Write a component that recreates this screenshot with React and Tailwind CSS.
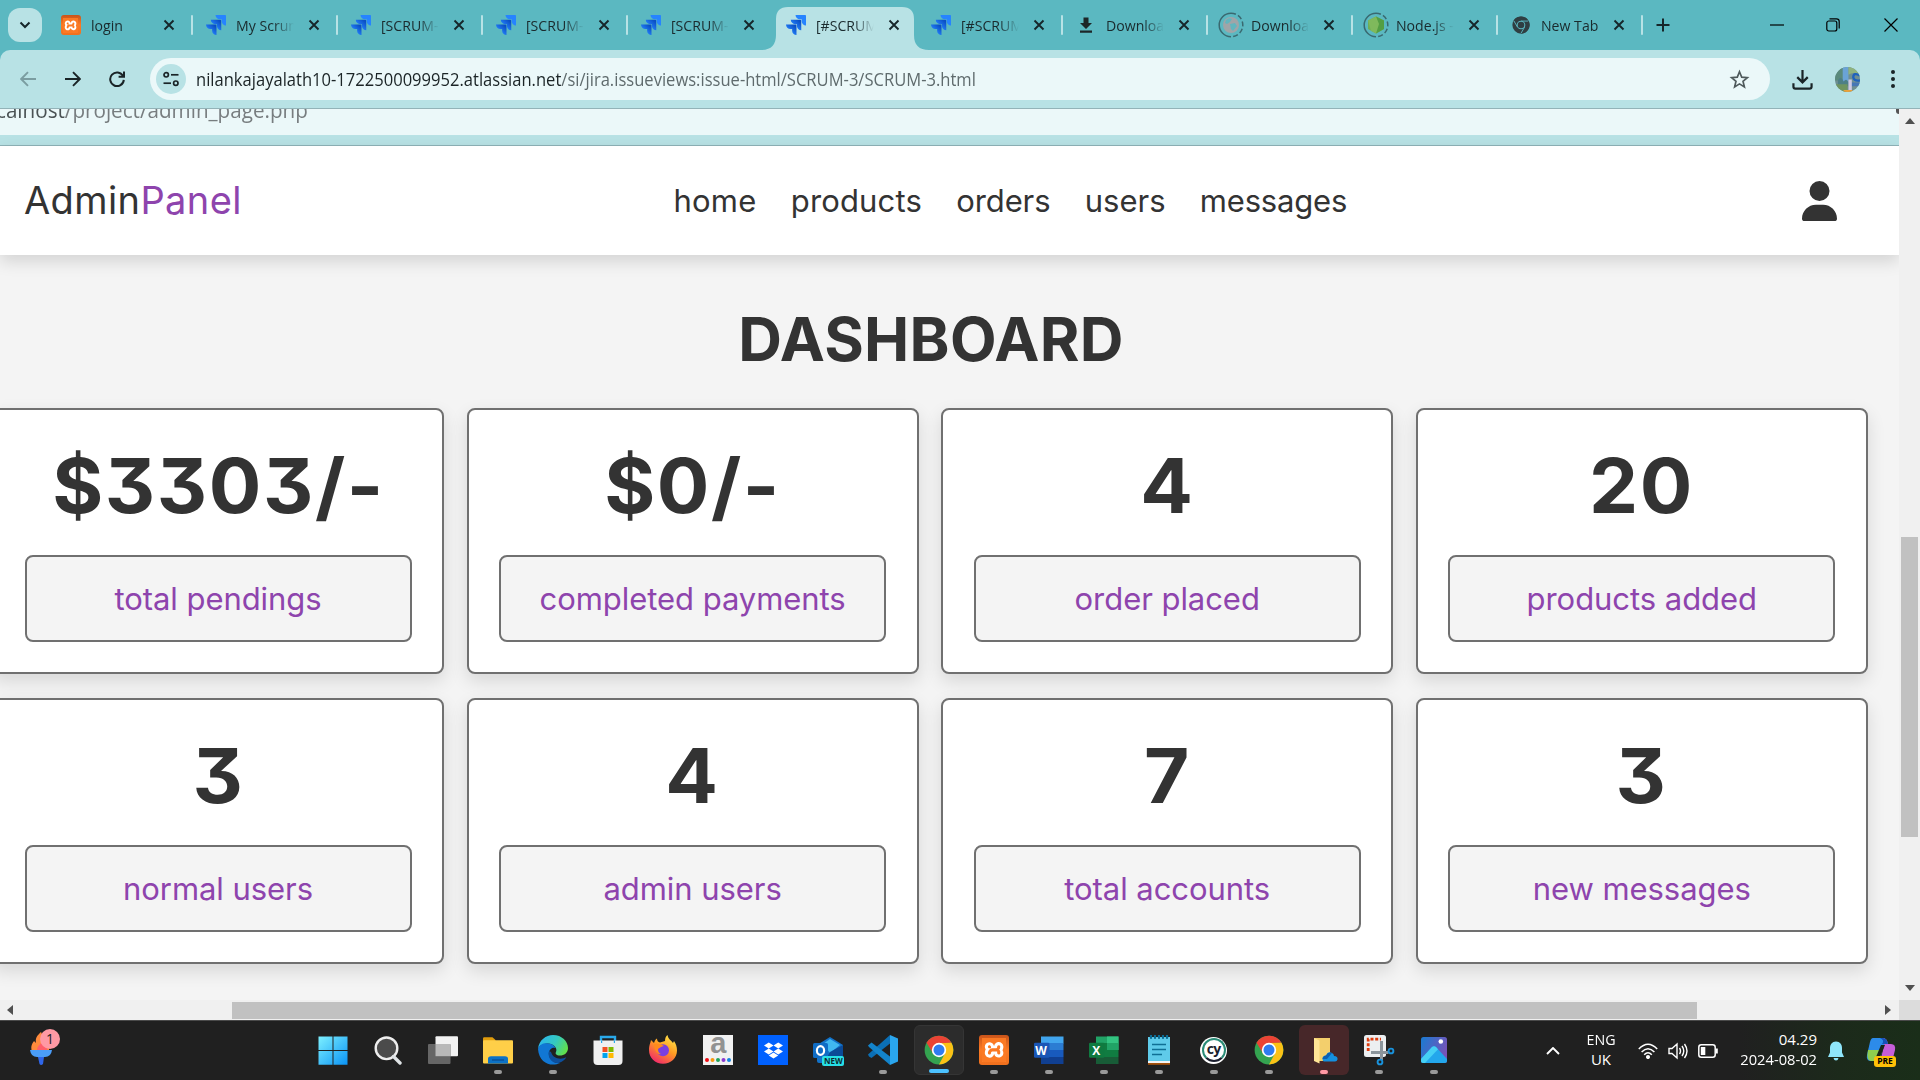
import React from "react";
import { FaUser, FaDropbox } from "react-icons/fa6";
import { SiXampp } from "react-icons/si";

const JIRA = [
  "M11.571 11.513H0a5.218 5.218 0 0 0 5.232 5.215h2.13v2.057A5.215 5.215 0 0 0 12.575 24V12.518a1.005 1.005 0 0 0-1.005-1.005z",
  "M17.294 5.757H5.736a5.215 5.215 0 0 0 5.215 5.214h2.129v2.058a5.218 5.218 0 0 0 5.215 5.214V6.758a1.001 1.001 0 0 0-1.001-1.001z",
  "M23.013 0H11.455a5.215 5.215 0 0 0 5.215 5.215h2.129v2.057A5.215 5.215 0 0 0 24 12.483V1.005A1.001 1.001 0 0 0 23.013 0Z",
];

function JiraIcon() {
  return (
    <svg viewBox="0 0 24 24" className="size-5 shrink-0">
      <defs>
        <linearGradient id="jg" x1="1" y1="0" x2="0.3" y2="0.7">
          <stop offset="0.2" stopColor="#0a4fc4" />
          <stop offset="1" stopColor="#2684ff" />
        </linearGradient>
      </defs>
      <path d={JIRA[0]} fill="url(#jg)" />
      <path d={JIRA[1]} fill="url(#jg)" />
      <path d={JIRA[2]} fill="#2684ff" />
    </svg>
  );
}

function XamppIcon({ className, glyph }) {
  return (
    <span className={`flex shrink-0 items-center justify-center overflow-hidden bg-gradient-to-b from-[#c9541a] via-[#fb7a24] to-[#f0701d] ${className}`}>
      <span className={`overflow-hidden bg-white ${glyph}`}>
        <SiXampp className="size-full scale-[1.06] text-[#fb7a24]" />
      </span>
    </span>
  );
}

function ChromeIcon({ mono, className }) {
  const [r, y, g, b] = mono ? ["#2f3e42", "#2f3e42", "#2f3e42", "#2f3e42"] : ["#ea4335", "#fbc116", "#34a350", "#2f7cf0"];
  const ring = mono ? "#5bb8c1" : "#fff";
  return (
    <svg viewBox="0 0 48 48" className={className}>
      <circle cx="24" cy="24" r="23" fill={g} />
      <path d="M24 24 L4.1 12.5 A23 23 0 0 1 43.9 12.5 L24 13 Z" fill={r} />
      <path d="M4.1 12.5 L14.5 29.5 L24 24 L24 13 Z" fill={r} />
      <path d="M43.9 12.5 A23 23 0 0 1 24 47 L33.5 29.5 L24 24 L24 13 L43.9 12.5 Z" fill={y} />
      {mono && <path d="M24 13.5 H43 M14.5 29.5 L5 13 M33.5 29.5 L24 46" stroke={ring} strokeWidth="2.5" />}
      <circle cx="24" cy="24" r="11.5" fill={ring} />
      <circle cx="24" cy="24" r="8.8" fill={b} />
    </svg>
  );
}

function LoadingIcon({ node }) {
  return (
    <svg viewBox="0 0 26 26" className="-ml-[3px] -mr-[3px] size-[26px] shrink-0">
      <path d="M13 1.2 A11.8 11.8 0 0 0 13 24.8" fill="none" stroke="#3a6970" strokeWidth="1.5" />
      <path d="M13 1.2 A11.8 11.8 0 0 1 13 24.8" fill="none" stroke="#3a6970" strokeWidth="1.5" strokeDasharray="5 2.4" />
      {node ? (
        <>
          <path d="M13 4.5 L21 8.5 V17 L13 21.5 L5 17 V8.5 Z" fill="#6fae55" />
          <path d="M13 4.5 L21 8.5 V17 L13 21.5 Z" fill="#539e43" />
          <path d="M13 4.5 L5 8.5 L8 18.7 L13 21.5 L16 12 Z" fill="#7fb95c" />
        </>
      ) : (
        <>
          <circle cx="13" cy="13" r="8" fill="#9fa5a8" />
          <path d="M8 8 Q11 5 14 7 L12 10 L9 12 L7 11 Z M12 12 L17 11 L19 14 L15 19 L13 17 Z" fill="#62b5be" />
        </>
      )}
    </svg>
  );
}

function DownloadSolid() {
  return (
    <svg viewBox="0 0 20 20" className="size-5 shrink-0" fill="#1d2628">
      <path d="M7.5 2.5h5v5.5h3.5L10 14 4 8h3.5zM4 15.5h12v2.2H4z" />
    </svg>
  );
}

const TABS = [
  { t: "login", i: <XamppIcon className="size-5 rounded-[3px]" glyph="size-[15px]" />, sep: true, full: true },
  { t: "My Scrum", i: <JiraIcon />, sep: true },
  { t: "[SCRUM-", i: <JiraIcon />, sep: true },
  { t: "[SCRUM-", i: <JiraIcon />, sep: true },
  { t: "[SCRUM-", i: <JiraIcon /> },
  { t: "[#SCRUM", i: <JiraIcon />, active: true },
  { t: "[#SCRUM", i: <JiraIcon />, sep: true },
  { t: "Download", i: <DownloadSolid />, sep: true },
  { t: "Download", i: <LoadingIcon />, sep: true },
  { t: "Node.js -", i: <LoadingIcon node />, sep: true },
  { t: "New Tab", i: <ChromeIcon mono className="size-[18px] mx-px shrink-0" />, sep: true, full: true },
];

function Tab({ t, i, sep, active, full }) {
  return (
    <div className="relative flex h-[50px] w-[145px] shrink-0 items-center pl-[13px]">
      {active && (
        <svg viewBox="0 0 168 43" className="absolute -left-[12px] top-[7px] h-[43px] w-[168px]">
          <path d="M0 43 Q15 43 15 28 V12 Q15 0 27 0 H141 Q153 0 153 12 V28 Q153 43 168 43 Z" fill="#b8e2e5" />
        </svg>
      )}
      <div className="relative flex w-full items-center">
        {i}
        <div className={full ? "ml-[10px] w-[58px]" : "ml-[10px] w-[58px] overflow-hidden [mask-image:linear-gradient(to_right,black_65%,transparent_100%)]"}>
          <span className="block origin-left scale-x-[0.94] whitespace-nowrap text-[15px] leading-6 text-[#1a2a2d]">{t}</span>
        </div>
        <svg viewBox="0 0 12 12" className="ml-[14px] size-3 shrink-0" stroke="#16262a" strokeWidth="1.9">
          <path d="M1.5 1.5 L10.5 10.5 M10.5 1.5 L1.5 10.5" />
        </svg>
      </div>
      {sep && <div className="h-5 w-[2px] shrink-0 rounded bg-[#b8e2e5]" />}
    </div>
  );
}

function TabStrip() {
  return (
    <div className="flex h-[50px] items-center bg-[#5bb8c1]">
      <div className="ml-2 mr-[5.5px] flex h-[34px] w-[34px] shrink-0 items-center justify-center rounded-xl bg-[#b8e2e5]">
        <svg viewBox="0 0 12 8" className="h-2 w-3" fill="none" stroke="#16262a" strokeWidth="2">
          <path d="M1.5 1.5 L6 6 L10.5 1.5" />
        </svg>
      </div>
      {TABS.map((tab, n) => <Tab key={n} {...tab} />)}
      <svg viewBox="0 0 14 14" className="ml-[13px] size-[14px]" stroke="#16262a" strokeWidth="2">
        <path d="M7 .5 V13.5 M.5 7 H13.5" />
      </svg>
      <div className="ml-auto flex items-center text-black">
        <svg viewBox="0 0 14 14" className="mr-[42px] size-[14px]" stroke="currentColor" strokeWidth="1.2"><path d="M0 7 H14" /></svg>
        <svg viewBox="0 0 14 14" className="mr-[44px] size-[14px]" fill="none" stroke="currentColor" strokeWidth="1.2">
          <rect x=".8" y="3" width="10" height="10" rx="2" />
          <path d="M3.5 .8 H10.5 Q13.2 .8 13.2 3.5 V10.5" />
        </svg>
        <svg viewBox="0 0 14 14" className="mr-[22px] size-[14px]" stroke="currentColor" strokeWidth="1.2"><path d="M.5 .5 L13.5 13.5 M13.5 .5 L.5 13.5" /></svg>
      </div>
    </div>
  );
}

function Arrow({ back }) {
  return (
    <svg viewBox="0 0 16 16" className={back ? "size-4 rotate-180 text-[#7b9da1]" : "size-4 text-[#1a2427]"} fill="none" stroke="currentColor" strokeWidth="1.9">
      <path d="M0 8 H14.5 M8 1.2 L14.8 8 L8 14.8" />
    </svg>
  );
}

function Toolbar() {
  return (
    <div className="bg-[#5bb8c1]">
      <div className="flex h-[59px] items-center rounded-t-[10px] border-b border-[#93b3b8] bg-[#b8e2e5] pl-[20px]">
        <Arrow back />
        <span className="w-[29px]" />
        <Arrow />
        <span className="w-[28px]" />
        <svg viewBox="0 0 16 16" className="size-4" fill="none" stroke="#1a2427" strokeWidth="2">
          <path d="M14 5 A6.8 6.8 0 1 0 14.8 8.8" />
          <path d="M15 0.5 V5.8 H9.6" />
        </svg>
        <div className="ml-[25px] flex h-[42px] w-[1620px] items-center rounded-full bg-[#ebf8f9] pl-[6px] pr-5">
          <span className="flex size-[30px] items-center justify-center rounded-full bg-[#b8e2e5]">
            <svg viewBox="0 0 16 16" className="size-4" fill="none" stroke="#1a2427" strokeWidth="1.7">
              <circle cx="3.2" cy="3.8" r="2.2" /><path d="M8 3.8 H15.5" />
              <circle cx="12.8" cy="12.2" r="2.2" /><path d="M.5 12.2 H8" />
            </svg>
          </span>
          <span className="ml-[10px] origin-left scale-x-[0.92] whitespace-nowrap text-[18px] leading-6 text-[#1b2426]">
            nilankajayalath10-1722500099952.atlassian.net<span className="text-[#5f6b6d]">/si/jira.issueviews:issue-html/SCRUM-3/SCRUM-3.html</span>
          </span>
          <svg viewBox="0 0 24 24" className="ml-auto size-[21px]" fill="none" stroke="#4f5a5c" strokeWidth="1.9">
            <path d="M12 3.2 L14.5 9.3 L21 9.8 L16 14 L17.6 20.5 L12 17 L6.4 20.5 L8 14 L3 9.8 L9.5 9.3 Z" />
          </svg>
        </div>
        <svg viewBox="0 0 22 22" className="ml-[22px] size-[21px]" fill="none" stroke="#1a2427" strokeWidth="2.3">
          <path d="M11 1 V13.5 M5.5 8.5 L11 14 L16.5 8.5" />
          <path d="M1.5 15 V18.5 Q1.5 20.5 3.5 20.5 H18.5 Q20.5 20.5 20.5 18.5 V15" />
        </svg>
        <svg viewBox="0 0 26 26" className="ml-[22px] size-[25px] rounded-full">
          <rect width="26" height="26" fill="#6f8f92" />
          <path d="M0 0 H9 V14 H0 Z" fill="#5a8a7c" />
          <path d="M8 0 H14 V16 H8 Z" fill="#6aa3d6" />
          <path d="M3 14 Q6 8 9 15 Q12 11 14 16 V20 H3 Z" fill="#4d7f86" />
          <path d="M14 0 H26 V9 Q20 4 14 8 Z" fill="#8fb37e" />
          <path d="M26 9 Q19 5 19 11 Q20 15 26 14" fill="none" stroke="#1f62bd" strokeWidth="2.4" />
          <path d="M16 16 H26 V20 H16 Z" fill="#4676b5" />
          <path d="M0 18 H13 V26 H0 Z" fill="#6f9460" />
          <path d="M14 13 H17.5 V24 H14 Z" fill="#cfc9e2" />
          <path d="M9 24 H18 V26 H9 Z" fill="#e9a13b" />
        </svg>
        <svg viewBox="0 0 4 20" className="ml-[30.5px] h-5 w-1" fill="#1a2427">
          <circle cx="2" cy="3" r="2" /><circle cx="2" cy="10" r="2" /><circle cx="2" cy="17" r="2" />
        </svg>
      </div>
    </div>
  );
}

const CARDS = [
  ["$3303/-", "total pendings"],
  ["$0/-", "completed payments"],
  ["4", "order placed"],
  ["20", "products added"],
  ["3", "normal users"],
  ["4", "admin users"],
  ["7", "total accounts"],
  ["3", "new messages"],
];

function Card({ value, label }) {
  return (
    <div className="h-[266px] rounded-lg border-2 border-[#707070] bg-white px-[30.5px] pt-[38px] text-center shadow-[0_7px_18px_rgba(0,0,0,0.12)]">
      <div className="scale-x-[1.04] text-[75px] font-bold leading-none tracking-[1.5px] text-[#333]">{value}</div>
      <div className="mt-8 flex h-[87px] items-center justify-center rounded-lg border-2 border-[#707070] bg-[#f4f4f4] pb-px text-[31px] leading-none tracking-[-0.05px] text-[#8e44ad]">
        {label}
      </div>
    </div>
  );
}

function PageView() {
  return (
    <div className="h-[891px] min-w-0 flex-1 overflow-hidden bg-[#f4f4f4]">
      <div className="h-[26px] overflow-hidden bg-[#ebf8f9]">
        <div className="flex justify-between">
          <div className="-ml-[4px] -mt-[14px] origin-left scale-x-[0.96] whitespace-nowrap text-[21.5px] leading-[29px] text-[#777d7f]">
            <span className="text-[#4a5254]">calhost</span>/project/admin_page.php
          </div>
          <div className="h-[5px] w-[3px] rounded-bl-full bg-[#555]" />
        </div>
      </div>
      <div className="h-[11px] border-b border-[#8fb3b8] bg-[#b8e2e5]" />
      <div className="font-[Inter,sans-serif] [font-feature-settings:'cv09']">
        <header className="relative flex h-[109px] items-center bg-white pl-6 text-[#333] shadow-[0_6px_16px_rgba(0,0,0,0.14)]">
          <div className="w-[649.5px] pb-[2px] text-[38px] leading-none tracking-[0.4px]">
            Admin<span className="text-[#8e44ad]">Panel</span>
          </div>
          <nav className="flex gap-[34.3px] pb-px text-[31px] leading-none">
            <span className="tracking-[0.2px]">home</span>
            <span className="tracking-[0.15px]">products</span>
            <span className="tracking-[-0.1px]">orders</span>
            <span>users</span>
            <span className="tracking-[-0.2px]">messages</span>
          </nav>
          <FaUser className="ml-auto mr-[62px] h-10 w-[35px]" />
        </header>
        <h1 className="ml-[-37px] mt-[54px] text-center text-[60.5px] font-bold leading-none tracking-[0.3px] text-[#333]">DASHBOARD</h1>
        <div className="-ml-[8px] mt-[38.5px] grid grid-cols-[repeat(4,452px)] gap-x-[22.6px] gap-y-6">
          {CARDS.map(([v, l], n) => <Card key={n} value={v} label={l} />)}
        </div>
      </div>
    </div>
  );
}

function Tri({ className }) {
  return <svg viewBox="0 0 10 6" className={`h-[6px] w-[10px] shrink-0 ${className}`} fill="#505050"><path d="M0 6 L5 0 L10 6 Z" /></svg>;
}

const I = "size-[30px]";

function AppIcon({ name }) {
  switch (name) {
    case "start":
      return (
        <svg viewBox="0 0 30 30" className={I}>
          <defs><linearGradient id="win" x1="0" y1="0" x2="1" y2="1"><stop stopColor="#7df0ff" /><stop offset="1" stopColor="#0a93f5" /></linearGradient></defs>
          <path d="M.5 1.5 H14.5 V15 H.5 Z M15.5 1.5 H29.5 V15 H15.5 Z M.5 16 H14.5 V29.8 H.5 Z M15.5 16 H29.5 V29.8 H15.5 Z" fill="url(#win)" />
        </svg>
      );
    case "search":
      return (
        <svg viewBox="0 0 30 30" className={I}>
          <circle cx="13.5" cy="13.3" r="10.8" fill="#4b4b4b" stroke="#eee" strokeWidth="2.4" />
          <path d="M20.5 21.5 L27 28" stroke="#dfe3e6" strokeWidth="3.4" strokeLinecap="round" />
        </svg>
      );
    case "taskview":
      return (
        <svg viewBox="0 0 30 30" className={I}>
          <rect x="7.5" y="1.2" width="22.5" height="20" rx="1" fill="#f2f2f2" />
          <rect x="0" y="9" width="22.5" height="20" rx="1" fill="#666" />
          <path d="M7.5 9 H22.5 V21.2 H7.5 Z" fill="#b9b9b9" />
        </svg>
      );
    case "explorer":
      return (
        <svg viewBox="0 0 30 30" className={I}>
          <path d="M0 3.5 Q0 2.3 1.2 2.3 H9.5 L12.5 5 V9 H0 Z" fill="#e09c0c" />
          <rect y="5.2" width="30" height="23.3" rx="1" fill="#ffcf48" />
          <path d="M5 28.5 V24 Q5 21.3 8 21.3 H22 Q25 21.3 25 24 V28.5 Z" fill="#0c72c6" />
          <path d="M9 25 H21" stroke="#0b4f95" strokeWidth="1.4" />
        </svg>
      );
    case "edge":
      return (
        <svg viewBox="0 0 30 30" className={I}>
          <defs><linearGradient id="eg" x1="0" y1="0.2" x2="1" y2="0.6"><stop stopColor="#2bb5f0" /><stop offset=".55" stopColor="#35c9c0" /><stop offset="1" stopColor="#62e04a" /></linearGradient></defs>
          <path d="M0 14 C1 5 8 0 15 0 C24 0 30 6.5 30 13 C30 18 26 20.5 22 20.5 C18 20.5 17 18.5 18 17 C20 13 15 8 9 8.5 C4.5 9 1 11 0 14 Z" fill="url(#eg)" />
          <path d="M0 14 C1 10 5 8 9 8.3 C14 8.6 17 11 17.5 13 C14 11.5 10 15 11 20 C12 25 17 29 22 28 C14 32 1 29 0 14 Z" fill="#1177d4" />
          <path d="M11 16 C9 23 15 30 22 27.5 C25 26.3 27 24.5 28.3 22.2 C23 25 15 24 13 17 Z" fill="#0d4f9c" />
        </svg>
      );
    case "store":
      return (
        <svg viewBox="0 0 30 30" className={I}>
          <path d="M8 8 V2 H22 V8" fill="none" stroke="#29a9ea" strokeWidth="2.4" />
          <path d="M.5 5.5 H29.5 V26 Q29.5 30 25.5 30 H4.5 Q.5 30 .5 26 Z" fill="#f0f0f0" />
          <path d="M8 5.5 V8 H9.2 V5.5 Z M20.8 5.5 V8 H22 V5.5 Z" fill="#29a9ea" />
          <path d="M9.5 12 H14.5 V17 H9.5 Z" fill="#f25022" /><path d="M15.5 12 H20.5 V17 H15.5 Z" fill="#7fba00" />
          <path d="M9.5 18 H14.5 V23 H9.5 Z" fill="#00a4ef" /><path d="M15.5 18 H20.5 V23 H15.5 Z" fill="#ffb900" />
        </svg>
      );
    case "firefox":
      return (
        <svg viewBox="0 0 30 30" className={I}>
          <defs><linearGradient id="ff" x1="0.8" y1="0" x2="0.2" y2="1"><stop stopColor="#ffe84a" /><stop offset=".45" stopColor="#ff9a22" /><stop offset="1" stopColor="#f02070" /></linearGradient></defs>
          <path d="M1 15 C1 10 2.5 8 3 5 L6 8 C7 5 8 4 9 3.5 C9 6 10 7 12 7.5 L17 6 C17 3 18 1 19.5 0 C20 4 23 5 25 8 L26 6 C28 9 29 12 29 15.5 C29 23 23 28.7 15 28.7 C7 28.7 1 23 1 15 Z" fill="url(#ff)" />
          <circle cx="15" cy="15.3" r="6" fill="#7a3fe0" />
          <path d="M6 9 C9 7.5 13 9 16 11 C13 11.5 12 12.5 10 14 C10 17 11 18 13 19 C9 20 6 15 6 9 Z" fill="#ff8a1c" />
        </svg>
      );
    case "amazon":
      return (
        <span className="relative flex size-[30px] justify-center bg-[#f1f1f1]">
          <span className="-mt-[5px] font-['Liberation_Sans',sans-serif] text-[29px] font-bold leading-[26px] text-[#929292]">a</span>
          <svg viewBox="0 0 30 6" className="absolute bottom-[2px] left-0 h-[6px] w-[30px]">
            <circle cx="4" cy="3" r="2" fill="#f00c14" /><circle cx="9.5" cy="3" r="2" fill="#f79a10" /><circle cx="15" cy="3" r="2" fill="#20a35a" /><circle cx="20.5" cy="3" r="2" fill="#8a3ad0" /><circle cx="26" cy="3" r="2" fill="#1583e0" />
          </svg>
        </span>
      );
    case "dropbox":
      return <span className="flex size-[30px] items-center justify-center bg-[#0061ff]"><FaDropbox className="size-[19px] text-white" /></span>;
    case "outlook":
      return (
        <span className="relative size-[30px]">
          <svg viewBox="0 0 30 30" className={I}>
            <path d="M4 10 L17 2 L30 10 V26 Q30 28 28 28 H6 Q4 28 4 26 Z" fill="#1272c9" />
            <path d="M10 9 L17 4 L27 10 L17 18 Z" fill="#40b8f0" />
            <path d="M17 17 L30 10 V22 H14 Z" fill="#0b4a97" />
            <rect x="0" y="8" width="15" height="15" rx="1.5" fill="#0f6cc4" />
            <ellipse cx="7.5" cy="15.5" rx="3.6" ry="4.3" fill="none" stroke="#fff" strokeWidth="2.2" />
          </svg>
          <span className="absolute -bottom-px left-[9px] flex h-[10px] w-[22px] items-center justify-center rounded-[2px] bg-[#27dfe6] text-[8px] font-bold leading-none text-[#0b2b30]">NEW</span>
        </span>
      );
    case "vscode":
      return (
        <svg viewBox="0 0 30 30" className={I}>
          <path d="M0 19.5 L22 0 V8.5 L3.5 23 L1 21.5 Z" fill="#0b6fb5" />
          <path d="M0 10.5 L3.5 7.5 L22 21.5 V30 L1 12 Z" fill="#1384cb" />
          <path d="M22 0 L30 3.5 V26.5 L22 30 Z" fill="#2aa6ee" />
        </svg>
      );
    case "chrome":
      return <ChromeIcon className={I} />;
    case "xampp":
      return <XamppIcon className="size-[30px] rounded-[3px]" glyph="size-6" />;
    case "word":
    case "excel": {
      const w = name === "word";
      const c = w ? ["#41a5ee", "#2b7cd3", "#185abd", "#103f91", "#1a56b6"] : ["#21a366", "#33c481", "#107c41", "#185c37", "#0f7a40"];
      return (
        <span className="relative size-[30px]">
          <svg viewBox="0 0 30 30" className={I}>
            <rect x="7" y="1.5" width="22.5" height="7" fill={c[0]} /><rect x="7" y="8" width="22.5" height="7" fill={c[1]} />
            <rect x="7" y="15" width="22.5" height="7" fill={c[2]} /><rect x="7" y="22" width="22.5" height="7" fill={c[3]} />
            {!w && <path d="M18 1.5 H29.5 V8 H18 Z" fill="#33c481" />}
            {!w && <path d="M18 8 H29.5 V15 H18 Z" fill="#21a366" />}
            {!w && <path d="M7 8 H18 V22 H7 Z" fill="#107c41" />}
            <rect x="0" y="7.8" width="15.5" height="15" rx="1.3" fill={c[4]} />
          </svg>
          <span className="absolute left-0 top-[8px] w-[15px] text-center text-[12px] font-bold leading-[15px] text-white">{w ? "W" : "X"}</span>
        </span>
      );
    }
    case "notepad":
      return (
        <svg viewBox="0 0 30 30" className={I}>
          <path d="M4 26 H26 V29.8 H4 Z" fill="#a5520c" />
          <path d="M4 25 H26 V28 H4 Z" fill="#f4f4f4" />
          <path d="M4 2 H26 V26 H4 Z" fill="#5fcbea" />
          <path d="M7 0 V3 M11 0 V3 M15 0 V3 M19 0 V3 M23 0 V3" stroke="#0b6b93" strokeWidth="2.2" strokeLinecap="round" />
          <path d="M8 9.5 H22 M8 14.5 H22 M8 19.5 H18" stroke="#0f6f95" strokeWidth="1.7" />
        </svg>
      );
    case "cypress":
      return (
        <span className="flex size-[27px] items-center justify-center rounded-full bg-white">
          <span className="flex size-[24px] items-center justify-center rounded-full border-2 border-[#2a8c77] border-b-[#1b1e2e] pb-[3px] text-[14px] font-bold leading-none tracking-[-0.5px] text-[#1b1e2e]">cy</span>
        </span>
      );
    case "onedrive":
      return (
        <svg viewBox="0 0 30 30" className={I}>
          <path d="M5 3 H21 V26 H8 Z" fill="#f3cf6c" />
          <path d="M5 3 L10.5 5.5 V28.5 L5 26 Z" fill="#ffe596" />
          <path d="M14 26 Q12 21 17 20.5 Q19 15.5 23 18 Q25 19 25 21 Q29 21 28.5 24.5 Q28 26.5 26 26.5 H15 Z" fill="#1490df" />
          <path d="M13.5 24 Q14 20.5 17 20.5 Q19 16 23 18 L18 24 Z" fill="#0a5fb4" />
        </svg>
      );
    case "snip":
      return (
        <svg viewBox="0 0 30 30" className={`${I} overflow-visible`}>
          <rect x="0" y="0" width="22" height="22" rx="2.5" fill="#eceff1" />
          <path d="M4.2 16 V4.2 H17" fill="none" stroke="#dd3a0c" strokeWidth="2.8" strokeDasharray="3 1.7" />
          <path d="M7 17.5 H24.5 M17.5 6 V25" stroke="#8b959c" strokeWidth="3" />
          <circle cx="27" cy="16" r="2.4" fill="none" stroke="#1993dd" strokeWidth="1.9" />
          <circle cx="16" cy="27" r="2.4" fill="none" stroke="#1993dd" strokeWidth="1.9" />
        </svg>
      );
    default:
      return (
        <svg viewBox="0 0 30 30" className={I}>
          <defs><linearGradient id="ph" x1="0" y1="0.2" x2="1" y2="0.6"><stop stopColor="#1f79d0" /><stop offset="1" stopColor="#7a52b8" /></linearGradient></defs>
          <rect x="2" y="2" width="26" height="26" rx="2.5" fill="url(#ph)" />
          <path d="M2 24 L13 12 Q15 10.5 17 12 L28 24 V25.5 Q28 28 25.5 28 H4.5 Q2 28 2 25.5 Z" fill="#23a7ec" />
          <path d="M2 24 L13 12 Q15 10.5 17 12 L19 14.2 L6 28 H4.5 Q2 28 2 25.5 Z" fill="#45d0f5" />
          <circle cx="21.8" cy="6.5" r="2.3" fill="#fff" />
        </svg>
      );
  }
}

const APPS = [
  ["start"], ["search"], ["taskview"], ["explorer", 1], ["edge", 1], ["store"], ["firefox"], ["amazon"], ["dropbox"], ["outlook"],
  ["vscode", 1], ["chrome", 2], ["xampp", 1], ["word", 1], ["excel", 1], ["notepad", 1], ["cypress", 1], ["chrome", 1], ["onedrive", 3], ["snip", 1], ["photos", 1],
];

const TILE = { 2: "border border-[#353535] bg-[#2c2c2c]", 3: "bg-[#472729]" };
const MARK = { 1: "w-2 bg-[#9a9a9a]", 2: "w-5 bg-[#4cc2ff]", 3: "w-2 bg-[#ff99a4]" };

function Taskbar() {
  return (
    <div className="flex h-[60px] border-t border-[#4a4a4a] bg-[linear-gradient(to_right,#202020_0,#202020_1740px,#1c2a1b_1840px,#1a2e19_1920px)] text-white">
      <div className="relative w-[305.5px] shrink-0">
        <svg viewBox="0 0 24 36" className="ml-[29px] mt-[8px] h-9 w-6">
          <path d="M3 23 C1 16 4 14 5 12 L7 14 C6 8 9 6 12 3 C15 10 21 12 20 23 Z" fill="#ff8a3c" />
          <path d="M8 22 C8 16 12 16 13 12 C17 16 19 19 18 23 Z" fill="#ff5f6b" />
          <path d="M1 21 H23 Q22 28 16 28 H8 Q2 28 1 21 Z" fill="#4a9df8" />
          <path d="M9 28 H15 L14 35 Q12 37 10.5 35 Z" fill="#2f66ea" />
        </svg>
        <span className="absolute left-10 top-[8px] flex size-5 items-center justify-center rounded-full bg-[#ff99a4] text-[14px] leading-none text-[#222]">1</span>
      </div>
      <div className="flex">
        {APPS.map(([name, state], n) => (
          <div key={n} className="flex w-[55.06px] shrink-0 justify-center pt-1">
            <div className={`relative flex size-[50px] items-center justify-center rounded-md ${TILE[state] || ""}`}>
              <AppIcon name={name} />
              {state && <span className={`absolute bottom-[1px] h-1 rounded-full ${MARK[state]}`} />}
            </div>
          </div>
        ))}
      </div>
      <div className="ml-auto flex items-center text-[15px] leading-5">
        <svg viewBox="0 0 14 8" className="mr-[26px] h-2 w-[14px]" fill="none" stroke="#fff" strokeWidth="1.9"><path d="M1 7 L7 1 L13 7" /></svg>
        <div className="mr-[22px] w-[30px] pb-[3px] text-center"><div className="-mx-2 scale-x-95">ENG</div><div>UK</div></div>
        <svg viewBox="0 0 20 16" className="mr-[10px] h-4 w-5" fill="none" stroke="#fff" strokeWidth="1.5">
          <path d="M.8 6 Q10 -3.5 19.2 6 M3.6 9 Q10 2.3 16.4 9 M6.2 11.8 Q10 7.8 13.8 11.8" /><circle cx="10" cy="14" r="1.3" fill="#fff" />
        </svg>
        <svg viewBox="0 0 20 18" className="mr-[10px] h-[18px] w-5" fill="none" stroke="#fff" strokeWidth="1.4">
          <path d="M1 6.5 H4 L9 2 V16 L4 11.5 H1 Z M11.5 6 Q13.5 9 11.5 12 M14 4 Q17.5 9 14 14 M16.5 2 Q21.5 9 16.5 16" />
        </svg>
        <svg viewBox="0 0 20 14" className="mr-[19px] h-[14px] w-5" fill="none" stroke="#fff" strokeWidth="1.5">
          <rect x=".8" y=".8" width="16.4" height="12.4" rx="2.5" /><path d="M18.8 4.5 V9.5" strokeWidth="2" /><rect x="2.8" y="3" width="4.5" height="8" fill="#fff" stroke="none" />
        </svg>
        <div className="mr-[10px] w-[80px] pb-[3px] text-right"><div>04.29</div><div className="origin-right scale-x-[0.98] whitespace-nowrap">2024-08-02</div></div>
        <svg viewBox="0 0 18 20" className="mr-[21px] h-5 w-[18px]" fill="#8fe6fb">
          <path d="M9 .5 C13 .5 15 3.5 15 7 V11.5 L17 16 H1 L3 11.5 V7 C3 3.5 5 .5 9 .5 Z M6.5 17 H11.5 Q11 19.5 9 19.5 T6.5 17 Z" />
        </svg>
        <span className="relative mr-6 size-[30px]">
          <svg viewBox="0 0 30 30" className={I}>
            <path d="M7 2 H17 Q20 2 19 6 L14 22 Q13 25 10 25 H5 Q0 25 1 19 L4 6 Q5 2 7 2 Z" fill="#2c8bea" />
            <path d="M2 14 H16 L14 22 Q13 25 10 25 H5 Q0 25 2 14 Z" fill="#8fcf4f" />
            <path d="M17 2 Q21 2 22 8 H25 Q30 8 29 14 L27 22 Q26 26 22 26 H14 L18 10 Q19 4 17 2 Z" fill="#c65ed8" />
            <path d="M15 9 H19 L14 21 H10 Z" fill="#182618" />
            <path d="M17 2 Q21 2 22 8 H16 Q19 4 14 2 Z" fill="#1552b8" />
          </svg>
          <span className="absolute -bottom-[1px] left-[8px] flex h-[11px] w-[22px] items-center justify-center rounded-[3px] bg-[#ffc107] text-[8.5px] font-bold leading-none text-black">PRE</span>
        </span>
      </div>
    </div>
  );
}

export default function App() {
  return (
    <div className="flex h-[1080px] w-[1920px] flex-col overflow-hidden font-['Open_Sans','Noto_Sans',sans-serif]">
      <TabStrip />
      <Toolbar />
      <div className="flex h-[891px]">
        <PageView />
        <div className="flex w-[21px] flex-col items-center bg-[#f0f0f0]">
          <Tri className="mt-[9px]" />
          <div className="mt-[413px] h-[300px] w-[17px] bg-[#c1c1c1]" />
          <Tri className="mb-[9px] mt-auto rotate-180" />
        </div>
      </div>
      <div className="flex h-5 items-center bg-[#f0f0f0]">
        <Tri className="ml-[5px] -rotate-90" />
        <div className="ml-[217px] h-[17px] w-[1465px] bg-[#c1c1c1]" />
        <Tri className="ml-auto mr-[6px] rotate-90" />
        <div className="h-5 w-[21px] bg-[#dcdcdc]" />
      </div>
      <Taskbar />
    </div>
  );
}
